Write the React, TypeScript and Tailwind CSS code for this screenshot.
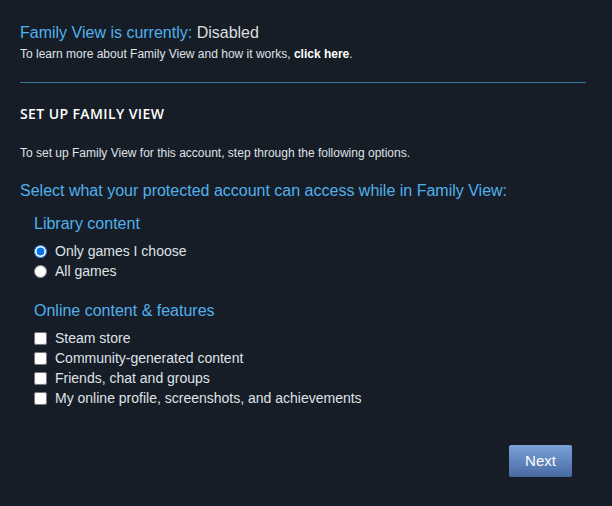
import { FC } from 'react';

const checks = [
  'Steam store',
  'Community-generated content',
  'Friends, chat and groups',
  'My online profile, screenshots, and achievements',
];

const App: FC = () => {
  return (
    <div className="w-[612px] h-[506px] bg-[#171d27] overflow-hidden font-['Liberation_Sans',Arial,sans-serif] text-[#dfe3e6]">
      <div className="px-5 pt-[24px]">
        <div className="text-[16px] leading-[18px] text-[#4fb1ec]">
          Family View is currently: <span className="text-[#dcdedf]">Disabled</span>
        </div>
        <p className="mt-[5px] text-[12px] leading-[14px]">
          To learn more about Family View and how it works,{' '}
          <a className="font-bold text-white">click here</a>.
        </p>

        <div className="mt-[21px] mr-[6px] h-px bg-[#34789c]" />

        <h2 className="mt-[23px] font-['Open_Sans',sans-serif] font-semibold text-[14px] leading-[16px] tracking-[0.4px] uppercase text-white">
          Set up Family View
        </h2>
        <p className="mt-[24px] text-[12px] leading-[14px]">
          To set up Family View for this account, step through the following options.
        </p>

        <div className="mt-[22px] text-[16px] leading-[18px] text-[#4fb1ec]">
          Select what your protected account can access while in Family View:
        </div>

        <div className="pl-[14px]">
          <div className="mt-[15px] text-[16px] leading-[18px] text-[#4fb1ec]">Library content</div>
          <div className="mt-[11px] flex flex-col gap-[6px] text-[14px] leading-[14px]">
            <label className="flex items-center gap-2">
              <input type="radio" name="lib" defaultChecked className="w-[13px] h-[13px] m-0 accent-[#0b73e6]" />
              Only games I choose
            </label>
            <label className="flex items-center gap-2">
              <input type="radio" name="lib" className="w-[13px] h-[13px] m-0" />
              All games
            </label>
          </div>

          <div className="mt-[24px] text-[16px] leading-[18px] text-[#4fb1ec]">Online content &amp; features</div>
          <div className="mt-[11px] flex flex-col gap-[6px] text-[14px] leading-[14px]">
            {checks.map(c => (
              <label key={c} className="flex items-center gap-2">
                <input type="checkbox" className="w-[13px] h-[13px] m-0" />
                {c}
              </label>
            ))}
          </div>
        </div>

        <div className="mt-[40px] flex justify-end pr-[20px]">
          <button className="w-[63px] h-[32px] rounded-[2px] bg-gradient-to-b from-[#7ca1d9] to-[#476aa1] text-white text-[15px] font-['Liberation_Sans',Arial,sans-serif]">
            Next
          </button>
        </div>
      </div>
    </div>
  );
};

export default App;
